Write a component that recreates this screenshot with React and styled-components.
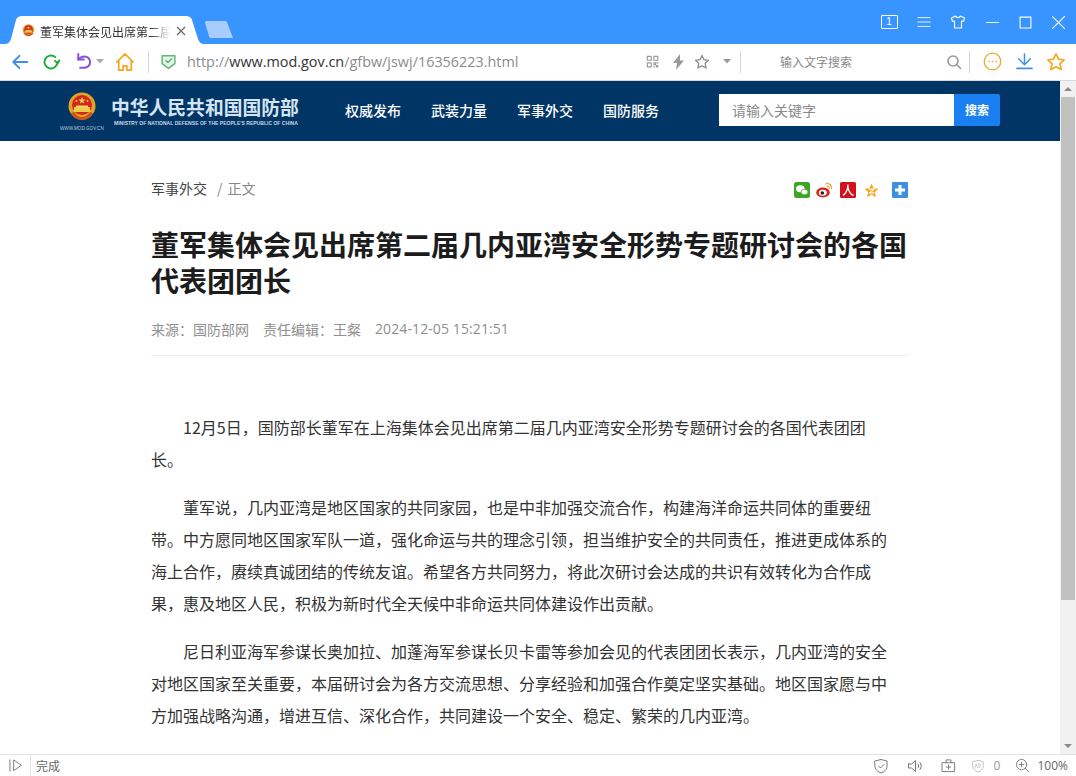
import React from "react";
import styled, { createGlobalStyle } from "styled-components";

const GlobalStyle = createGlobalStyle`
  html, body {
    margin: 0;
    height: 100%;
    overflow: hidden;
    background: #fff;
  }
  body {
    font-family: "Liberation Sans", "Noto Sans CJK SC", sans-serif;
  }
  #root {
    height: 776px;
  }
`;

const Window = styled.div`
  height: 776px;
  display: flex;
  flex-direction: column;
`;

const TitleBar = styled.div`
  flex: 0 0 44px;
  background: #3894ff;
  display: flex;
  align-items: flex-end;
  padding-left: 5px;
`;

const Tab = styled.div`
  position: relative;
  width: 199px;
  height: 28px;
  display: flex;
  align-items: center;
  padding-left: 17px;
  box-sizing: border-box;
  svg.shape {
    position: absolute;
    left: 0;
    top: 0;
  }
`;

const TabIcon = styled.div`
  position: relative;
  flex: 0 0 13px;
  height: 13px;
  margin-top: 1px;
  svg {
    display: block;
  }
`;

const TabTitle = styled.span`
  position: relative;
  width: 130px;
  margin-left: 5px;
  margin-top: 2px;
  overflow: hidden;
  white-space: nowrap;
  font: 12px "Noto Sans CJK SC", sans-serif;
  color: #333;
  -webkit-mask-image: linear-gradient(90deg, #000 85%, transparent 100%);
  mask-image: linear-gradient(90deg, #000 85%, transparent 100%);
`;

const TabClose = styled.svg`
  position: relative;
  margin-left: 6px;
  margin-top: 2px;
`;

const NewTab = styled.svg`
  margin: 0 0 6px 1px;
`;

const WindowControls = styled.div`
  margin-left: auto;
  align-self: flex-start;
  height: 44px;
  display: flex;
  align-items: center;
  padding-right: 1px;
`;

const ControlSlot = styled.div`
  width: ${(p) => p.$w || 34}px;
  display: flex;
  justify-content: center;
  align-items: center;
`;

const CountBox = styled.span`
  width: 15px;
  height: 12px;
  border: 1px solid #fff;
  border-radius: 1px;
  color: #fff;
  font: 10px/12px "Liberation Sans", sans-serif;
  text-align: center;
`;

const Toolbar = styled.div`
  flex: 0 0 37px;
  box-sizing: border-box;
  background: #fff;
  border-bottom: 1px solid #d8d8d8;
  display: flex;
  align-items: center;
  padding: 0 0 1px 5px;
`;

const ToolSlot = styled.div`
  flex: 0 0 ${(p) => p.$w}px;
  height: 24px;
  display: flex;
  justify-content: center;
  align-items: center;
`;

const ToolSep = styled.div`
  flex: 0 0 1px;
  height: 22px;
  background: #d5d5d5;
`;

const Url = styled.div`
  flex: 0 0 453px;
  font: 14.4px "Open Sans", sans-serif;
  color: #8c8c8c;
  white-space: nowrap;
  b {
    font-weight: 400;
    color: #333;
  }
`;

const SearchHint = styled.div`
  flex: 0 0 198px;
  padding-left: 39px;
  box-sizing: border-box;
  font: 12px "Noto Sans CJK SC", sans-serif;
  color: #888;
`;

const Body = styled.div`
  flex: 1;
  min-height: 0;
  display: flex;
`;

const Page = styled.div`
  flex: 1;
  min-width: 0;
  overflow: hidden;
  font-family: "Noto Sans CJK SC", sans-serif;
  text-spacing-trim: space-all;
`;

const SiteHeader = styled.header`
  height: 60px;
  background: #003566;
`;

const HeaderInner = styled.div`
  width: 940px;
  height: 60px;
  margin: 0 auto;
  display: flex;
  align-items: center;
`;

const Logo = styled.div`
  display: flex;
  width: 285px;
  height: 60px;
`;

const EmblemBlock = styled.div`
  width: 51px;
  display: flex;
  flex-direction: column;
  align-items: flex-start;
  padding-top: 11px;
  box-sizing: border-box;
  svg {
    margin-left: 7px;
  }
  span {
    margin-top: 4px;
    font: 4.6px/6px "Liberation Sans", sans-serif;
    color: #b9c9da;
    white-space: nowrap;
  }
`;

const LogoText = styled.div`
  padding-top: 14px;
  strong {
    display: block;
    font: 700 18.8px/24px "Noto Sans CJK SC", sans-serif;
    color: #d5e4f2;
    white-space: nowrap;
  }
  small {
    display: block;
    margin-left: 3px;
    margin-top: 1px;
    font: 700 5.05px/7px "Liberation Sans", sans-serif;
    color: #c8d6e4;
    white-space: nowrap;
  }
`;

const Nav = styled.nav`
  display: flex;
  gap: 30px;
  margin-bottom: 2px;
`;

const NavLink = styled.a`
  color: #fff;
  font-size: 14px;
  font-weight: 500;
`;

const SearchForm = styled.div`
  margin: 0 0 2px auto;
  display: flex;
  height: 32px;
`;

const SearchInput = styled.div`
  width: 235px;
  background: #fff;
  box-sizing: border-box;
  padding-left: 13px;
  font-size: 14px;
  line-height: 32px;
  color: #8a8a8a;
`;

const SearchButton = styled.div`
  width: 46px;
  background: #1a7ff0;
  border-radius: 0 2px 2px 0;
  color: #fff;
  text-align: center;
  font-size: 12px;
  font-weight: 700;
  line-height: 32px;
`;

const Article = styled.article`
  width: 758px;
  margin: 0 auto;
  padding-top: 36px;
`;

const CrumbRow = styled.div`
  display: flex;
  align-items: center;
  height: 22px;
  font-size: 14px;
`;

const Crumb = styled.span`
  margin-left: ${(p) => p.$gap || 0}px;
  color: ${(p) => (p.$muted ? "#888" : "#444")};
`;

const Share = styled.div`
  margin: 4px 1px 0 auto;
  display: flex;
  align-items: center;
`;

const ShareIcon = styled.svg`
  display: block;
  margin-left: ${(p) => p.$gap || 0}px;
`;

const Title = styled.h1`
  margin: 27px 0 0;
  font-size: 28px;
  line-height: 36px;
  font-weight: 700;
  color: #1c1c1c;
`;

const Meta = styled.div`
  margin-top: 21px;
  padding-bottom: 16px;
  border-bottom: 1px solid #eee;
  display: flex;
  gap: 14px;
  font-size: 14px;
  line-height: 20px;
  color: #8f8f8f;
`;

const MetaDate = styled.span`
  font-family: "Open Sans", sans-serif;
  font-size: 14px;
  letter-spacing: 0.1px;
`;

const Content = styled.div`
  width: 740px;
  padding-top: 55px;
`;

const Para = styled.p`
  margin: 0 0 16px;
  font-size: 16px;
  line-height: 32px;
  text-indent: 32px;
  color: #333;
`;

const Scrollbar = styled.div`
  flex: 0 0 16px;
  background: #f1f1f1;
  display: flex;
  flex-direction: column;
  align-items: center;
`;

const ScrollArrow = styled.div`
  flex: 0 0 16px;
  display: flex;
  align-items: center;
  justify-content: center;
  margin-top: ${(p) => (p.$push ? "auto" : 0)};
  &::before {
    content: "";
    border-left: 4px solid transparent;
    border-right: 4px solid transparent;
    ${(p) => (p.$down ? "border-top" : "border-bottom")}: 4px solid #8a8a8a;
  }
`;

const ScrollThumb = styled.div`
  width: 14px;
  height: 503px;
  background: #c1c1c1;
`;

const StatusBar = styled.footer`
  flex: 0 0 22px;
  box-sizing: border-box;
  border-top: 1px solid #e2e2e2;
  display: flex;
  align-items: center;
  font: 12px "Noto Sans CJK SC", sans-serif;
  color: #666;
  background: #fff;
`;

const StatusPlay = styled.div`
  flex: 0 0 30px;
  height: 21px;
  border-right: 1px solid #e2e2e2;
  display: flex;
  align-items: center;
  justify-content: center;
`;

const StatusText = styled.span`
  margin-left: 5px;
`;

const StatusRight = styled.div`
  margin-left: auto;
  display: flex;
  align-items: center;
  padding-right: 8px;
`;

const StatusItem = styled.div`
  display: flex;
  align-items: center;
  gap: ${(p) => p.$gap || 0}px;
  margin-left: ${(p) => p.$left}px;
  font-family: "Open Sans", sans-serif;
  color: ${(p) => (p.$faint ? "#999" : "#666")};
`;

const Line = ({ size = 16, color = "#777", width = 1.2, children, vb }) => (
  <svg
    width={size}
    height={size}
    viewBox={vb || "0 0 16 16"}
    fill="none"
    stroke={color}
    strokeWidth={width}
    strokeLinecap="round"
    strokeLinejoin="round"
  >
    {children}
  </svg>
);

const Caret = ({ color = "#999" }) => (
  <svg width="8" height="5" viewBox="0 0 8 5">
    <path d="M0 0h8L4 4.5z" fill={color} />
  </svg>
);

const Emblem = ({ size }) => (
  <svg width={size} height={size} viewBox="0 0 30 30">
    <circle cx="15" cy="14" r="13.5" fill="#e0a526" />
    <circle cx="15" cy="13" r="10" fill="#d3261c" />
    <path d="M15 5l1 2.4 2.5.2-2 1.6.7 2.4-2.2-1.4-2.2 1.4.7-2.4-2-1.6 2.5-.2z" fill="#f5cf4a" />
    <circle cx="9.5" cy="9" r="1" fill="#f5cf4a" />
    <circle cx="20.5" cy="9" r="1" fill="#f5cf4a" />
    <rect x="7" y="15" width="16" height="5" fill="#f0c84a" />
    <rect x="9" y="13.5" width="12" height="2" fill="#f5d968" />
    <path d="M4 21c3 6 7 7 11 7s8-1 11-7l-3-1c-2 3-5 5-8 5s-6-2-8-5z" fill="#c9551c" />
  </svg>
);

const paragraphs = [
  "12月5日，国防部长董军在上海集体会见出席第二届几内亚湾安全形势专题研讨会的各国代表团团长。",
  "董军说，几内亚湾是地区国家的共同家园，也是中非加强交流合作，构建海洋命运共同体的重要纽带。中方愿同地区国家军队一道，强化命运与共的理念引领，担当维护安全的共同责任，推进更成体系的海上合作，赓续真诚团结的传统友谊。希望各方共同努力，将此次研讨会达成的共识有效转化为合作成果，惠及地区人民，积极为新时代全天候中非命运共同体建设作出贡献。",
  "尼日利亚海军参谋长奥加拉、加蓬海军参谋长贝卡雷等参加会见的代表团团长表示，几内亚湾的安全对地区国家至关重要，本届研讨会为各方交流思想、分享经验和加强合作奠定坚实基础。地区国家愿与中方加强战略沟通，增进互信、深化合作，共同建设一个安全、稳定、繁荣的几内亚湾。",
];

const navItems = ["权威发布", "武装力量", "军事外交", "国防服务"];

const App = () => (
  <Window>
    <GlobalStyle />
    <TitleBar>
      <Tab>
        <svg className="shape" width="199" height="28" viewBox="0 0 199 28">
          <path d="M0 28C3 28 5 26 6 23L11 4C12 1 14 0 17 0H180C184 0 186 1 187 4L193 23C194 26 196 28 199 28Z" fill="#fff" />
        </svg>
        <TabIcon>
          <Emblem size={13} />
        </TabIcon>
        <TabTitle>董军集体会见出席第二届几内亚湾</TabTitle>
        <TabClose width="10" height="10" viewBox="0 0 10 10">
          <path d="M1 1l8 8M9 1l-8 8" stroke="#666" strokeWidth="1.2" />
        </TabClose>
      </Tab>
      <NewTab width="28" height="17" viewBox="0 0 28 17">
        <path d="M0 1.5C0 .5.5 0 1.5 0H20c1 0 1.6.4 2 1.3L28 17H6C5 17 4.5 16.6 4.2 15.8Z" fill="#a8cdfd" />
      </NewTab>
      <WindowControls>
        <ControlSlot $w={36}>
          <CountBox>1</CountBox>
        </ControlSlot>
        <ControlSlot $w={34}>
          <Line size={14} color="#fff" width={1}>
            <path d="M1 3h14M1 8h14M1 13h14" />
          </Line>
        </ControlSlot>
        <ControlSlot>
          <Line size={16} color="#fff" width={1.1}>
            <path d="M5.5 2L1.5 4l1 3.5 2-.5V14h7V7l2 .5 1-3.5-4-2c-.5 2-4.5 2-5 0z" />
          </Line>
        </ControlSlot>
        <ControlSlot>
          <Line size={13} color="#fff" width={1} vb="0 0 12 12">
            <path d="M.5 6h11" />
          </Line>
        </ControlSlot>
        <ControlSlot $w={33}>
          <Line size={13} color="#fff" width={1} vb="0 0 12 12">
            <rect x="1" y="1" width="10" height="10" />
          </Line>
        </ControlSlot>
        <ControlSlot $w={33}>
          <Line size={13} color="#fff" width={1} vb="0 0 12 12">
            <path d="M.5.5l11 11M11.5.5l-11 11" />
          </Line>
        </ControlSlot>
      </WindowControls>
    </TitleBar>

    <Toolbar>
      <ToolSlot $w={30}>
        <Line size={18} color="#3f8fe8" width={1.7}>
          <path d="M14.5 8H2M7.5 2.5L2 8l5.5 5.5" />
        </Line>
      </ToolSlot>
      <ToolSlot $w={32}>
        <Line size={18} color="#19ad3a" width={1.7}>
          <path d="M13.8 8A5.8 5.8 0 1 1 11.8 3.6" />
          <path d="M15.5 6.5L13.8 9 11.5 7" />
        </Line>
      </ToolSlot>
      <ToolSlot $w={29}>
        <Line size={20} color="#8a4fd8" width={1.6} vb="-2.5 0 16 16">
          <path d="M2.5 1.5V6H7" />
          <path d="M2.5 6C4 4 5.5 3.5 7.500 3.500a4.500 4.500 0 0 1 0 9H4" />
        </Line>
      </ToolSlot>
      <ToolSlot $w={8}>
        <Caret color="#aaa" />
      </ToolSlot>
      <ToolSlot $w={42}>
        <Line size={20} color="#f5a623" width={1.4}>
          <path d="M1.5 8L8 1.5 14.5 8M3 7v7.5h3.5V11h3v3.5H13V7" />
        </Line>
      </ToolSlot>
      <ToolSlot $w={2} />
      <ToolSep />
      <ToolSlot $w={38}>
        <Line size={17} color="#5fb878" width={1.4}>
          <path d="M2 2.5h12v7.5L8 14.5 2 10z" fill="#e3f3e6" />
          <path d="M5.5 7L7.5 9l3.5-3.5" />
        </Line>
      </ToolSlot>
      <Url>
        http://<b>www.mod.gov.cn</b>/gfbw/jswj/16356223.html
      </Url>
      <ToolSlot $w={26}>
        <Line size={14} color="#999" width={1.3}>
          <path d="M1.5 1.5H6V6H1.5zM9 1.5h4.500V6H9zM1.5 9H6v4.500H1.5zM9 9h2v2H9zM12.500 9h1M9 13.500h1M12 12h1.500v1.500H12z" />
        </Line>
      </ToolSlot>
      <ToolSlot $w={24}>
        <svg width="13" height="16" viewBox="0 0 13 16">
          <path d="M8 0L1 9h4l-1 7 8-9.500H8z" fill="#9a9a9a" />
        </svg>
      </ToolSlot>
      <ToolSlot $w={24}>
        <Line size={16} color="#888" width={1.3}>
          <path d="M8 1.5l2 4.200 4.500.6-3.300 3.100.9 4.600L8 11.800 3.900 14l.9-4.600L1.500 6.300 6 5.700z" />
        </Line>
      </ToolSlot>
      <ToolSlot $w={26}>
        <Caret />
      </ToolSlot>
      <ToolSep />
      <SearchHint>输入文字搜索</SearchHint>
      <ToolSlot $w={30}>
        <Line size={16} color="#999" width={1.6}>
          <circle cx="7" cy="7" r="5" />
          <path d="M10.8 10.8L14.5 14.5" />
        </Line>
      </ToolSlot>
      <ToolSep />
      <ToolSlot $w={44}>
        <Line size={19} color="#eeaa2a" width={1.1}>
          <circle cx="8" cy="8" r="7" />
          <path d="M5 8h.2M8 8h.2M11 8h.2" strokeWidth="1.3" />
        </Line>
      </ToolSlot>
      <ToolSlot $w={20}>
        <Line size={17} color="#3f8fe8" width={1.4}>
          <path d="M8 1v9.500M2.500 5.500L8 11l5.500-5.500" />
          <path d="M1 14.500h14" strokeWidth="1.8" />
        </Line>
      </ToolSlot>
      <ToolSlot $w={44}>
        <Line size={20} color="#f0ab28" width={1.4}>
          <path d="M8 1.5l2 4.200 4.500.6-3.300 3.100.9 4.600L8 11.800 3.900 14l.9-4.600L1.500 6.300 6 5.700z" />
        </Line>
      </ToolSlot>
    </Toolbar>

    <Body>
      <Page>
        <SiteHeader>
          <HeaderInner>
            <Logo>
              <EmblemBlock>
                <Emblem size={30} />
                <span>WWW.MOD.GOV.CN</span>
              </EmblemBlock>
              <LogoText>
                <strong>中华人民共和国国防部</strong>
                <small>MINISTRY OF NATIONAL DEFENSE OF THE PEOPLE'S REPUBLIC OF CHINA</small>
              </LogoText>
            </Logo>
            <Nav>
              {navItems.map((item) => (
                <NavLink key={item}>{item}</NavLink>
              ))}
            </Nav>
            <SearchForm>
              <SearchInput>请输入关键字</SearchInput>
              <SearchButton>搜索</SearchButton>
            </SearchForm>
          </HeaderInner>
        </SiteHeader>

        <Article>
          <CrumbRow>
            <Crumb>军事外交</Crumb>
            <Crumb $gap={10} $muted>/</Crumb>
            <Crumb $gap={5} $muted>正文</Crumb>
            <Share>
              <ShareIcon width="16" height="16" viewBox="0 0 16 16">
                <rect width="16" height="16" rx="2.5" fill="#3fa524" />
                <ellipse cx="6.3" cy="6.8" rx="4.3" ry="3.5" fill="#fff" />
                <ellipse cx="10.5" cy="10" rx="3.5" ry="2.8" fill="#fff" stroke="#3fa524" strokeWidth=".7" />
              </ShareIcon>
              <ShareIcon $gap={6} width="17" height="16" viewBox="0 0 17 16">
                <ellipse cx="7" cy="10.5" rx="6.8" ry="5" fill="#d9251c" />
                <ellipse cx="6.8" cy="10.8" rx="4" ry="3" fill="#fff" />
                <circle cx="6.3" cy="11" r="1.8" fill="#222" />
                <path d="M10 1.5c3.5-.5 6 2 5.5 5.5M10.5 4c1.800-.2 3 1 2.700 2.700" fill="none" stroke="#f39a1e" strokeWidth="1.1" />
              </ShareIcon>
              <ShareIcon $gap={7} width="16" height="16" viewBox="0 0 16 16">
                <rect width="16" height="16" rx="1.5" fill="#d1121c" />
                <path d="M8 2.5c-.2 5-1.500 8.500-5 11M8 5c.5 4 2 7 5.500 8.500" fill="none" stroke="#fff" strokeWidth="1.4" />
              </ShareIcon>
              <ShareIcon $gap={8} width="15" height="15" viewBox="0 0 16 16">
                <path d="M8 .5l2.300 5 5.200.6-3.900 3.600 1.100 5.400L8 12.300 3.300 15.100l1.100-5.400L.5 6.100l5.200-.6z" fill="#f2a81f" />
                <path d="M5 6.500h6L6 10.500h5" fill="none" stroke="#fff" strokeWidth="1.2" />
              </ShareIcon>
              <ShareIcon $gap={13} width="16" height="16" viewBox="0 0 16 16">
                <rect width="16" height="16" rx="1" fill="#3d8fe0" />
                <path d="M6.5 3h3v3.500H13v3H9.500V13h-3V9.500H3v-3h3.500z" fill="#fff" />
              </ShareIcon>
            </Share>
          </CrumbRow>
          <Title>董军集体会见出席第二届几内亚湾安全形势专题研讨会的各国代表团团长</Title>
          <Meta>
            <span>来源：国防部网</span>
            <span>责任编辑：王粲</span>
            <MetaDate>2024-12-05 15:21:51</MetaDate>
          </Meta>
          <Content>
            {paragraphs.map((text) => (
              <Para key={text.slice(0, 12)}>{text}</Para>
            ))}
          </Content>
        </Article>
      </Page>
      <Scrollbar>
        <ScrollArrow />
        <ScrollThumb />
        <ScrollArrow $down $push />
      </Scrollbar>
    </Body>

    <StatusBar>
      <StatusPlay>
        <Line size={15} color="#777" width={1}>
          <path d="M2 2v12M6 2.500v11L14 8z" />
        </Line>
      </StatusPlay>
      <StatusText>完成</StatusText>
      <StatusRight>
        <StatusItem $left={0}>
          <Line size={16} color="#777" width={1}>
            <path d="M2 3l6-1.500L14 3v5.500c0 3-3 5.500-6 6.500-3-1-6-3.500-6-6.500z" />
            <path d="M5.500 8l2 2 3.500-3.500" />
          </Line>
        </StatusItem>
        <StatusItem $left={18}>
          <Line size={16} color="#777" width={1}>
            <path d="M1.500 6v4h3l4 3.500v-11l-4 3.500zM11 6c1 1 1 3 0 4M13 4.500c1.700 2 1.700 5 0 7" />
          </Line>
        </StatusItem>
        <StatusItem $left={18}>
          <Line size={15} color="#777" width={1}>
            <path d="M1.500 5h13v9.500h-13zM5.500 5V2h5v3M8 7.500v4.500M5.800 9.700h4.400" />
          </Line>
        </StatusItem>
        <StatusItem $left={15} $gap={9} $faint>
          <Line size={14} color="#bbb" width={1}>
            <path d="M2 3l6-1.500L14 3v5.500c0 3-3 5.500-6 6.500-3-1-6-3.500-6-6.500z" />
            <path d="M4.500 10l1.500-4.500L7.500 10M9 5.500v4.500c2.500 0 2.500-4.500 0-4.500z" strokeWidth=".8" />
          </Line>
          0
        </StatusItem>
        <StatusItem $left={15} $gap={7}>
          <Line size={15} color="#777" width={1}>
            <circle cx="7" cy="7" r="5.500" />
            <path d="M11 11l3.500 3.500M7 4.500v5M4.500 7h5" />
          </Line>
          100%
        </StatusItem>
      </StatusRight>
    </StatusBar>
  </Window>
);

export default App;
